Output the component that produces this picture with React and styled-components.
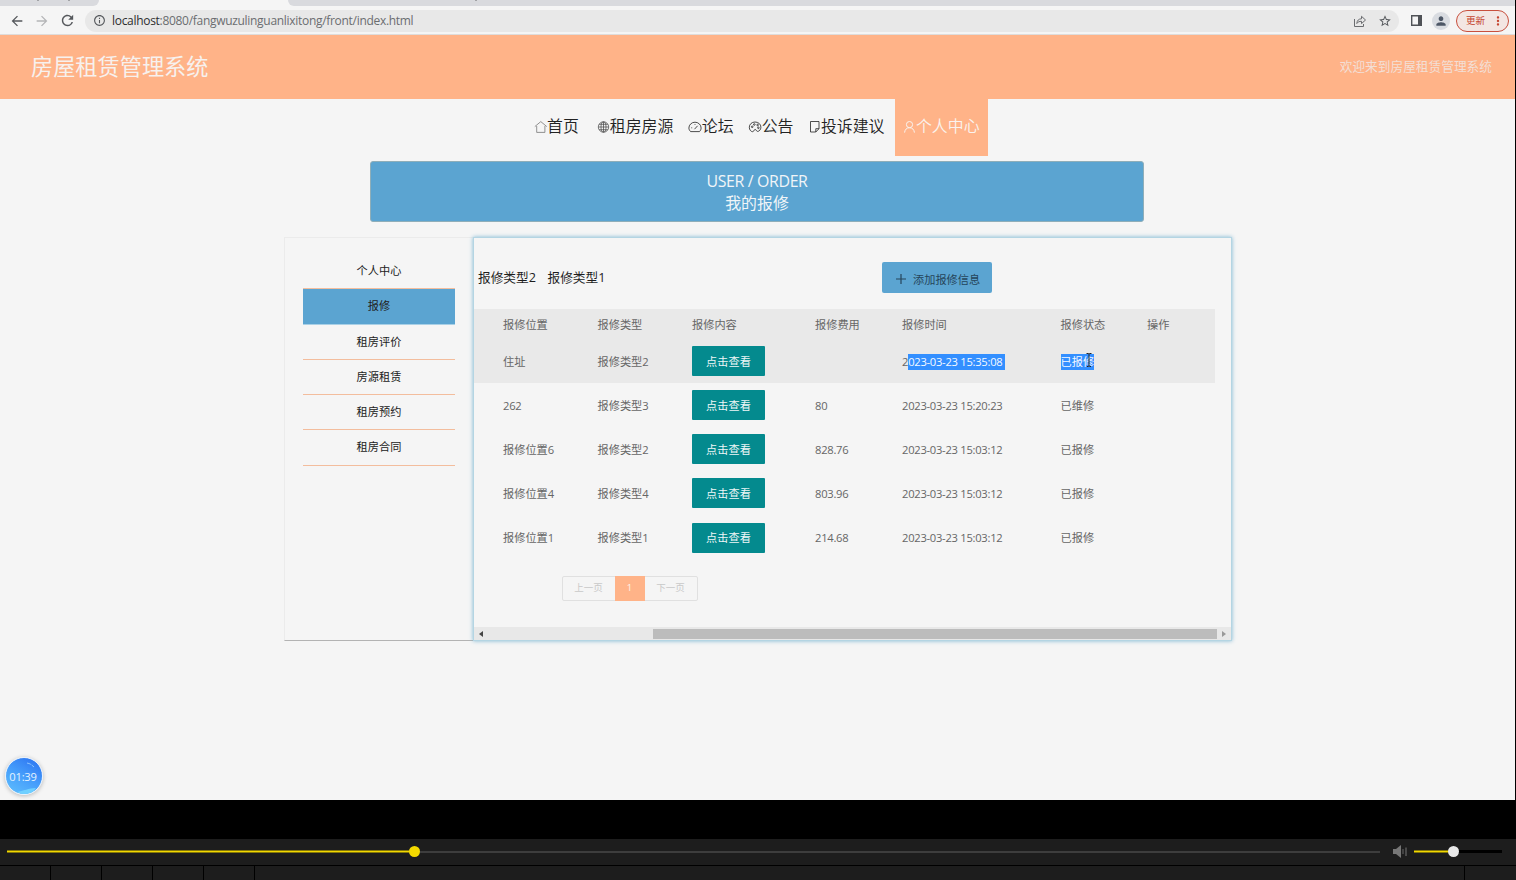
import React from "react";
import styled, { createGlobalStyle, css } from "styled-components";
import {
  MdArrowBack,
  MdArrowForward,
  MdRefresh,
  MdInfoOutline,
  MdStarBorder,
  MdPerson,
  MdMoreVert
} from "react-icons/md";

const GlobalStyle = createGlobalStyle`
  * {
    box-sizing: border-box;
  }
  body {
    margin: 0;
    background: #000;
    font-family: "Open Sans", "Noto Sans CJK SC", sans-serif;
    overflow: hidden;
  }
  svg {
    display: block;
    flex: none;
  }
`;

const Screen = styled.div`
  position: relative;
  width: 1516px;
  height: 880px;
  display: flex;
  flex-direction: column;
  white-space: nowrap;
`;

const Browser = styled.div`
  width: 1515px;
  height: 800px;
  background: #f5f5f5;
`;

const TabStrip = styled.div`
  height: 6px;
  display: flex;
  justify-content: space-between;
  background: #f5f5f5;
`;

const InactiveTabs = styled.div`
  width: ${props => props.$width}px;
  background: #d9dade;
  border-radius: ${props => props.$radius};
  display: flex;
  padding-left: ${props => props.$inset}px;
  gap: 29px;
`;

const TabTick = styled.i`
  width: 2px;
  height: 1px;
  background: #a2a3a6;
`;

const Toolbar = styled.div`
  height: 29px;
  display: flex;
  align-items: center;
  padding: 1px 6px 0 9px;
  background: #f5f5f5;
  border-bottom: 1px solid #dedcdb;
  color: #55585c;
`;

const ToolButton = styled.span`
  margin-right: ${props => props.$gap}px;
  color: ${props => (props.$faded ? "#b4b5b7" : "#55585c")};
`;

const Omnibox = styled.div`
  flex: 1;
  height: 22px;
  margin-right: 12px;
  padding: 0 7px 0 8px;
  display: flex;
  align-items: center;
  background: #e8e8e8;
  border-radius: 11px;
`;

const Url = styled.span`
  flex: 1;
  margin-left: 6px;
  font-size: 12px;
  line-height: 20px;
  letter-spacing: -0.3px;
  color: #6b6d70;
  b {
    font-weight: 400;
    color: #2d2e30;
  }
`;

const Avatar = styled.span`
  width: 18px;
  height: 18px;
  margin: 0 6px 0 10px;
  display: flex;
  align-items: center;
  justify-content: center;
  border-radius: 50%;
  background: #d9dce1;
  color: #4d5766;
`;

const UpdateButton = styled.span`
  width: 53px;
  height: 22px;
  display: flex;
  align-items: center;
  justify-content: space-between;
  padding: 0 3px 0 9px;
  border: 1px solid #c8503e;
  border-radius: 11px;
  background: #f3e6e3;
  color: #c5442f;
  font-size: 9.5px;
  line-height: 14px;
`;

const Header = styled.header`
  height: 63.5px;
  display: flex;
  align-items: center;
  justify-content: space-between;
  padding: 0 23px 0 31px;
  background: #ffb388;
  color: #f7f1ee;
`;

const Title = styled.h1`
  margin: 0;
  font-size: 22.2px;
  font-weight: 400;
  line-height: 30px;
`;

const Welcome = styled.span`
  font-size: 12.7px;
  line-height: 20px;
  padding-bottom: 2px;
  color: #f3dfd6;
`;

const Nav = styled.nav`
  height: 62.5px;
  display: flex;
  padding-left: 533px;
  align-items: flex-start;
`;

const NavItem = styled.a`
  height: 57px;
  display: flex;
  align-items: center;
  margin-left: ${props => props.$gap}px;
  padding-bottom: 3px;
  font-size: 15.9px;
  font-weight: 350;
  color: #222;
  svg {
    width: 14px;
    height: 14px;
    margin-top: 3px;
  }
  ${props =>
    props.$active &&
    css`
      width: 93px;
      padding-left: 7px;
      background: #ffb388;
      color: #faf3ef;
    `}
`;

const Banner = styled.div`
  width: 774px;
  height: 61px;
  margin-left: 370px;
  padding-top: 8px;
  background: #5ba4d1;
  border: 1px solid #8faeb9;
  border-radius: 3px;
  text-align: center;
  color: #f0f5f8;
  line-height: 22px;
`;

const BannerTitle = styled.div`
  font-size: 15.9px;
  letter-spacing: ${props => (props.$latin ? "-0.35px" : "0")};
`;

const Main = styled.main`
  width: 948px;
  height: 404px;
  margin: 15px 0 0 284px;
  display: flex;
`;

const Sidebar = styled.ul`
  width: 189px;
  margin: 0;
  padding: 16px 18px 0;
  list-style: none;
  border: 1px solid #ebebeb;
  border-right: 0;
  border-bottom-color: #b3b3b3;
`;

const SidebarItem = styled.li`
  height: 35.3px;
  text-align: center;
  font-size: 11.2px;
  line-height: 33px;
  color: #222;
  border-bottom: 1px solid ${props => (props.$active ? "#a9d0e6" : "#f3bd9d")};
  background: ${props => (props.$active ? "#5ba4d1" : "transparent")};
`;

const Panel = styled.section`
  width: 759px;
  display: flex;
  flex-direction: column;
  border: 1px solid #b4d5e3;
  box-shadow: 0 0 4px #7fb8d4;
`;

const PanelTop = styled.div`
  height: 71px;
  display: flex;
  padding: 24px 0 0 4px;
`;

const Filter = styled.a`
  width: 69.5px;
  font-size: 12.7px;
  line-height: 30px;
  color: #1d1d1d;
`;

const AddButton = styled.button`
  width: 110px;
  height: 31px;
  margin-left: 265px;
  padding: 2px 0 0 14px;
  display: flex;
  align-items: center;
  gap: 7px;
  border: 0;
  border-radius: 2px;
  background: #5ba4d1;
  color: #26455a;
  font: inherit;
  font-size: 11.2px;
`;

const Table = styled.div`
  width: 741px;
  font-size: 11.2px;
  color: #666;
`;

const Row = styled.div`
  height: ${props => (props.$head ? 30 : 44.15)}px;
  display: grid;
  grid-template-columns: 94.5px 94.5px 123px 87px 158.5px 86.5px 1fr;
  align-items: center;
  padding-left: 29px;
  background: ${props => (props.$shaded ? "#e9e9e9" : "transparent")};
`;

const Cell = styled.span`
  line-height: 16px;
  padding-top: 1px;
  letter-spacing: ${props => (props.$latin ? "-0.27px" : "0")};
`;

const Selected = styled.mark`
  display: inline-block;
  height: 16px;
  line-height: 16px;
  background: #338fff;
  color: #f5f9ff;
  padding-right: ${props => props.$tail || 0}px;
`;

const ViewButton = styled.button`
  width: 73px;
  height: 30px;
  padding: 0 0 1px;
  border: 0;
  border-radius: 1px;
  background: #048a8e;
  color: #eef7f7;
  font: inherit;
`;

const Pager = styled.div`
  width: 136px;
  height: 25px;
  margin: 16px 0 0 87.5px;
  display: flex;
  border: 1px solid #e0e0e0;
  border-radius: 2px;
  font-size: 9.5px;
  line-height: 22px;
  text-align: center;
  color: #c9c9c9;
`;

const PageLink = styled.span`
  flex: 1;
`;

const CurrentPage = styled.span`
  width: 30px;
  margin: -1px 0;
  line-height: 24px;
  background: #ffb388;
  color: #fdf3ec;
`;

const ScrollBar = styled.div`
  height: 13px;
  margin-top: auto;
  padding: 0 5px;
  display: flex;
  align-items: center;
  justify-content: space-between;
  background: #e8e8e8;
`;

const ScrollThumb = styled.div`
  width: 564px;
  height: 10px;
  margin: 0 5px 0 auto;
  background: #bcbcbc;
`;

const Cursor = styled.svg`
  position: absolute;
  left: 1085px;
  top: 352px;
`;

const Timer = styled.div`
  position: absolute;
  left: 5px;
  top: 757px;
  width: 38px;
  height: 38px;
  border: 1px solid #e8f1fb;
  border-radius: 50%;
  overflow: hidden;
  background: linear-gradient(210deg, #2f78f2 10%, #459dfb 50%, #5bb9fd 90%);
  box-shadow: 0 1px 4px rgba(0, 0, 0, 0.25);
`;

const TimerText = styled.span`
  position: absolute;
  inset: 0 2px 0 0;
  text-align: center;
  font-size: 11.2px;
  line-height: 37px;
  letter-spacing: -0.2px;
  color: #e4f2ff;
`;

const Controls = styled.div`
  height: 26px;
  margin-top: 39px;
  padding: 0 14px 1px 7px;
  display: flex;
  align-items: center;
  background: #1d1d1d;
`;

const Seek = styled.div`
  width: ${props => props.$width}px;
  height: 11px;
  display: flex;
  align-items: center;
`;

const Played = styled.i`
  height: 3px;
  background: #f2d800;
  border: solid #857808;
  border-width: 1px 0;
`;

const Knob = styled.i`
  width: 11px;
  height: 11px;
  margin: 0 -5px;
  border-radius: 50%;
  background: ${props => props.$color};
  z-index: 1;
`;

const Remaining = styled.i`
  flex: 1;
  height: ${props => props.$height}px;
  background: ${props => props.$color};
`;

const VolumeIcon = styled.svg`
  margin: 0 7px 0 12px;
`;

const BottomStrip = styled.div`
  height: 14px;
  margin-top: 1px;
  display: flex;
  gap: 1px;
`;

const Slot = styled.span`
  width: ${props => (props.$width ? props.$width + "px" : "auto")};
  flex: ${props => (props.$width ? "none" : 1)};
  background: #1d1d1d;
`;

const iconPaths = {
  home: (
    <g stroke="#777">
      <path d="M2.2 6.600 8.200 1.600l6 5" transform="translate(-.4)" />
      <path d="M3.700 6v6.400h8.200V6" />
    </g>
  ),
  globe: (
    <g stroke="#444" strokeWidth="0.7">
      <circle cx="7.5" cy="7" r="5.2" />
      <ellipse cx="7.5" cy="7" rx="2.5" ry="5.2" />
      <path d="M7.500 2v10M2.500 7h10M3.200 4.300h8.600M3.200 9.700h8.600" />
    </g>
  ),
  dashboard: (
    <g>
      <path d="M2.6 11.6C1.4 10.4.9 9.2.9 8a6.1 5.8 0 0 1 12.2 0c0 1.300-.5 2.500-1.600 3.600z" />
      <path d="M6.500 9.200 9.600 5.800M3.300 7.800h.9M7 4v.8" />
    </g>
  ),
  palette: (
    <g>
      <path d="M7 2C3.700 2 1.300 4.400 1.300 7.200c0 2.600 1.700 4.500 3.300 4.500 1.500 0 1-2.200 2.600-2.200 1.400 0 1 1.900 2.400 1.900 1.700 0 3.300-1.800 3.300-4.200C12.900 4.300 10.500 2 7 2z" />
      <circle cx="4.200" cy="6.800" r=".8" />
      <circle cx="6.300" cy="4.500" r=".8" />
      <circle cx="9.600" cy="5" r=".8" />
      <circle cx="10.400" cy="7.800" r=".8" />
    </g>
  ),
  note: (
    <g>
      <path d="M3.500 1.500h8.500v7.200l-3.200 3.300H3.500z" />
      <path d="M8.800 12V8.700H12" />
    </g>
  ),
  user: (
    <g strokeWidth="1">
      <circle cx="7.500" cy="4.600" r="3.100" />
      <path d="M2.600 12.600c.2-2.900 2-4.900 4.900-4.900s4.700 2 4.900 4.900" />
    </g>
  )
};

const NavIcon = ({ name }) => (
  <svg
    viewBox="0 0 14 14"
    fill="none"
    stroke="currentColor"
    strokeWidth="0.8"
  >
    {iconPaths[name]}
  </svg>
);

const ShareIcon = () => (
  <svg
    width="14"
    height="14"
    viewBox="0 0 14 14"
    fill="none"
    stroke="#6a6c6f"
    strokeWidth="1"
  >
    <path d="M1.500 5v7.500h9V10" />
    <path d="M3.800 9.500c.3-3.200 2-4.700 4.700-4.700V2.300l4 3.700-4 3.600V7.300c-2.200 0-3.600.6-4.700 2.200z" />
  </svg>
);

const menu = [
  { icon: "home", label: "首页", gap: 0 },
  { icon: "globe", label: "租房房源", gap: 17 },
  { icon: "dashboard", label: "论坛", gap: 14.5 },
  { icon: "palette", label: "公告", gap: 14 },
  { icon: "note", label: "投诉建议", gap: 13.5 },
  { icon: "user", label: "个人中心", gap: 10.5, active: true }
];

const sideLinks = [
  "个人中心",
  "报修",
  "租房评价",
  "房源租赁",
  "租房预约",
  "租房合同"
];

const columns = [
  "报修位置",
  "报修类型",
  "报修内容",
  "报修费用",
  "报修时间",
  "报修状态",
  "操作"
];

const repairs = [
  {
    place: "住址",
    type: "报修类型2",
    cost: "",
    time: "2023-03-23 15:35:08",
    status: "已报修",
    selected: true
  },
  {
    place: "262",
    type: "报修类型3",
    cost: "80",
    time: "2023-03-23 15:20:23",
    status: "已维修"
  },
  {
    place: "报修位置6",
    type: "报修类型2",
    cost: "828.76",
    time: "2023-03-23 15:03:12",
    status: "已报修"
  },
  {
    place: "报修位置4",
    type: "报修类型4",
    cost: "803.96",
    time: "2023-03-23 15:03:12",
    status: "已报修"
  },
  {
    place: "报修位置1",
    type: "报修类型1",
    cost: "214.68",
    time: "2023-03-23 15:03:12",
    status: "已报修"
  }
];

const BrowserChrome = () => (
  <>
    <TabStrip>
      <InactiveTabs $width={99} $radius="0 0 6px 0" $inset={37}>
        <TabTick />
        <TabTick />
      </InactiveTabs>
      <InactiveTabs $width={1227} $radius="0 0 0 6px" $inset={187}>
        <TabTick />
      </InactiveTabs>
    </TabStrip>
    <Toolbar>
      <ToolButton $gap={9}>
        <MdArrowBack size={16} />
      </ToolButton>
      <ToolButton $gap={9} $faded>
        <MdArrowForward size={16} />
      </ToolButton>
      <ToolButton $gap={9}>
        <MdRefresh size={17} />
      </ToolButton>
      <Omnibox>
        <MdInfoOutline size={13} />
        <Url>
          <b>localhost</b>:8080/fangwuzulinguanlixitong/front/index.html
        </Url>
        <ToolButton $gap={11}>
          <ShareIcon />
        </ToolButton>
        <MdStarBorder size={14} />
      </Omnibox>
      <svg width="11" height="11" viewBox="0 0 11 11">
        <path d="M.7.7h9.600v9.600H.7z" fill="none" stroke="#505357" strokeWidth="1.400" />
        <path d="M7 .7h3.500v9.600H7z" fill="#505357" />
      </svg>
      <Avatar>
        <MdPerson size={14} />
      </Avatar>
      <UpdateButton>
        更新
        <MdMoreVert size={14} />
      </UpdateButton>
    </Toolbar>
  </>
);

const RepairRow = ({ repair }) => (
  <Row $shaded={repair.selected}>
    <Cell $latin={repair.place === "262"}>{repair.place}</Cell>
    <Cell>{repair.type}</Cell>
    <ViewButton>点击查看</ViewButton>
    <Cell $latin>{repair.cost}</Cell>
    <Cell $latin>
      {repair.selected ? (
        <>
          {repair.time[0]}
          <Selected $tail={3}>{repair.time.slice(1)}</Selected>
        </>
      ) : (
        repair.time
      )}
    </Cell>
    <Cell>
      {repair.selected ? <Selected>{repair.status}</Selected> : repair.status}
    </Cell>
  </Row>
);

const Player = () => (
  <>
    <Controls>
      <Seek $width={1373}>
        <Played style={{ width: 407 }} />
        <Knob $color="#f4da00" />
        <Remaining $height={2} $color="#3d3d3d" />
      </Seek>
      <VolumeIcon width="15" height="13" viewBox="0 0 15 13">
        <path d="M1 4h3l5-4v13L4 9H1z" fill="#777" />
        <path d="M11 4v5" stroke="#666" strokeWidth="1" />
        <path d="M14 2.500v8.500" stroke="#777" strokeWidth="1" />
      </VolumeIcon>
      <Seek $width={88}>
        <Played style={{ width: 39 }} />
        <Knob $color="#e8e8e8" />
        <Remaining $height={3} $color="#000" />
      </Seek>
    </Controls>
    <BottomStrip>
      {[50, 50, 50, 50, 50].map((width, i) => (
        <Slot key={i} $width={width} />
      ))}
      <Slot />
      <Slot $width={51} />
    </BottomStrip>
  </>
);

const App = () => (
  <Screen>
    <GlobalStyle />
    <Browser>
      <BrowserChrome />
      <Header>
        <Title>房屋租赁管理系统</Title>
        <Welcome>欢迎来到房屋租赁管理系统</Welcome>
      </Header>
      <Nav>
        {menu.map(item => (
          <NavItem key={item.icon} $gap={item.gap} $active={item.active}>
            <NavIcon name={item.icon} />
            {item.label}
          </NavItem>
        ))}
      </Nav>
      <Banner>
        <BannerTitle $latin>USER / ORDER</BannerTitle>
        <BannerTitle>我的报修</BannerTitle>
      </Banner>
      <Main>
        <Sidebar>
          {sideLinks.map(label => (
            <SidebarItem key={label} $active={label === "报修"}>
              {label}
            </SidebarItem>
          ))}
        </Sidebar>
        <Panel>
          <PanelTop>
            <Filter>报修类型2</Filter>
            <Filter>报修类型1</Filter>
            <AddButton>
              <svg width="10" height="10" viewBox="0 0 10 10">
                <path d="M5 0v10M0 5h10" stroke="#26455a" strokeWidth="1.200" />
              </svg>
              添加报修信息
            </AddButton>
          </PanelTop>
          <Table>
            <Row $head $shaded>
              {columns.map(name => (
                <Cell key={name}>{name}</Cell>
              ))}
            </Row>
            {repairs.map((repair, i) => (
              <RepairRow key={i} repair={repair} />
            ))}
          </Table>
          <Pager>
            <PageLink>上一页</PageLink>
            <CurrentPage>1</CurrentPage>
            <PageLink>下一页</PageLink>
          </Pager>
          <ScrollBar>
            <svg width="4" height="6" viewBox="0 0 4 6">
              <path d="M4 0v6L0 3z" fill="#444" />
            </svg>
            <ScrollThumb />
            <svg width="4" height="6" viewBox="0 0 4 6">
              <path d="M0 0v6l4-3z" fill="#999" />
            </svg>
          </ScrollBar>
        </Panel>
      </Main>
    </Browser>
    <Player />
    <Cursor width="8" height="16" viewBox="0 0 8 16">
      <path
        d="M1.500 1.500h2l.5.500.5-.5h2M4 2v12M2 14.500h1.500L4 14l.5.500H6"
        fill="none"
        stroke="#222"
      />
    </Cursor>
    <Timer>
      <svg width="36" height="36" viewBox="0 0 36 36">
        <path d="M21 5c3 .5 5 2 7 4" fill="none" stroke="#8cc4ff" strokeDasharray="4 1" />
        <path d="M11 34c6-1 12-4 19-4l-4 5-8 2z" fill="#6fd0ff" />
      </svg>
      <TimerText>01:39</TimerText>
    </Timer>
  </Screen>
);

export default App;
